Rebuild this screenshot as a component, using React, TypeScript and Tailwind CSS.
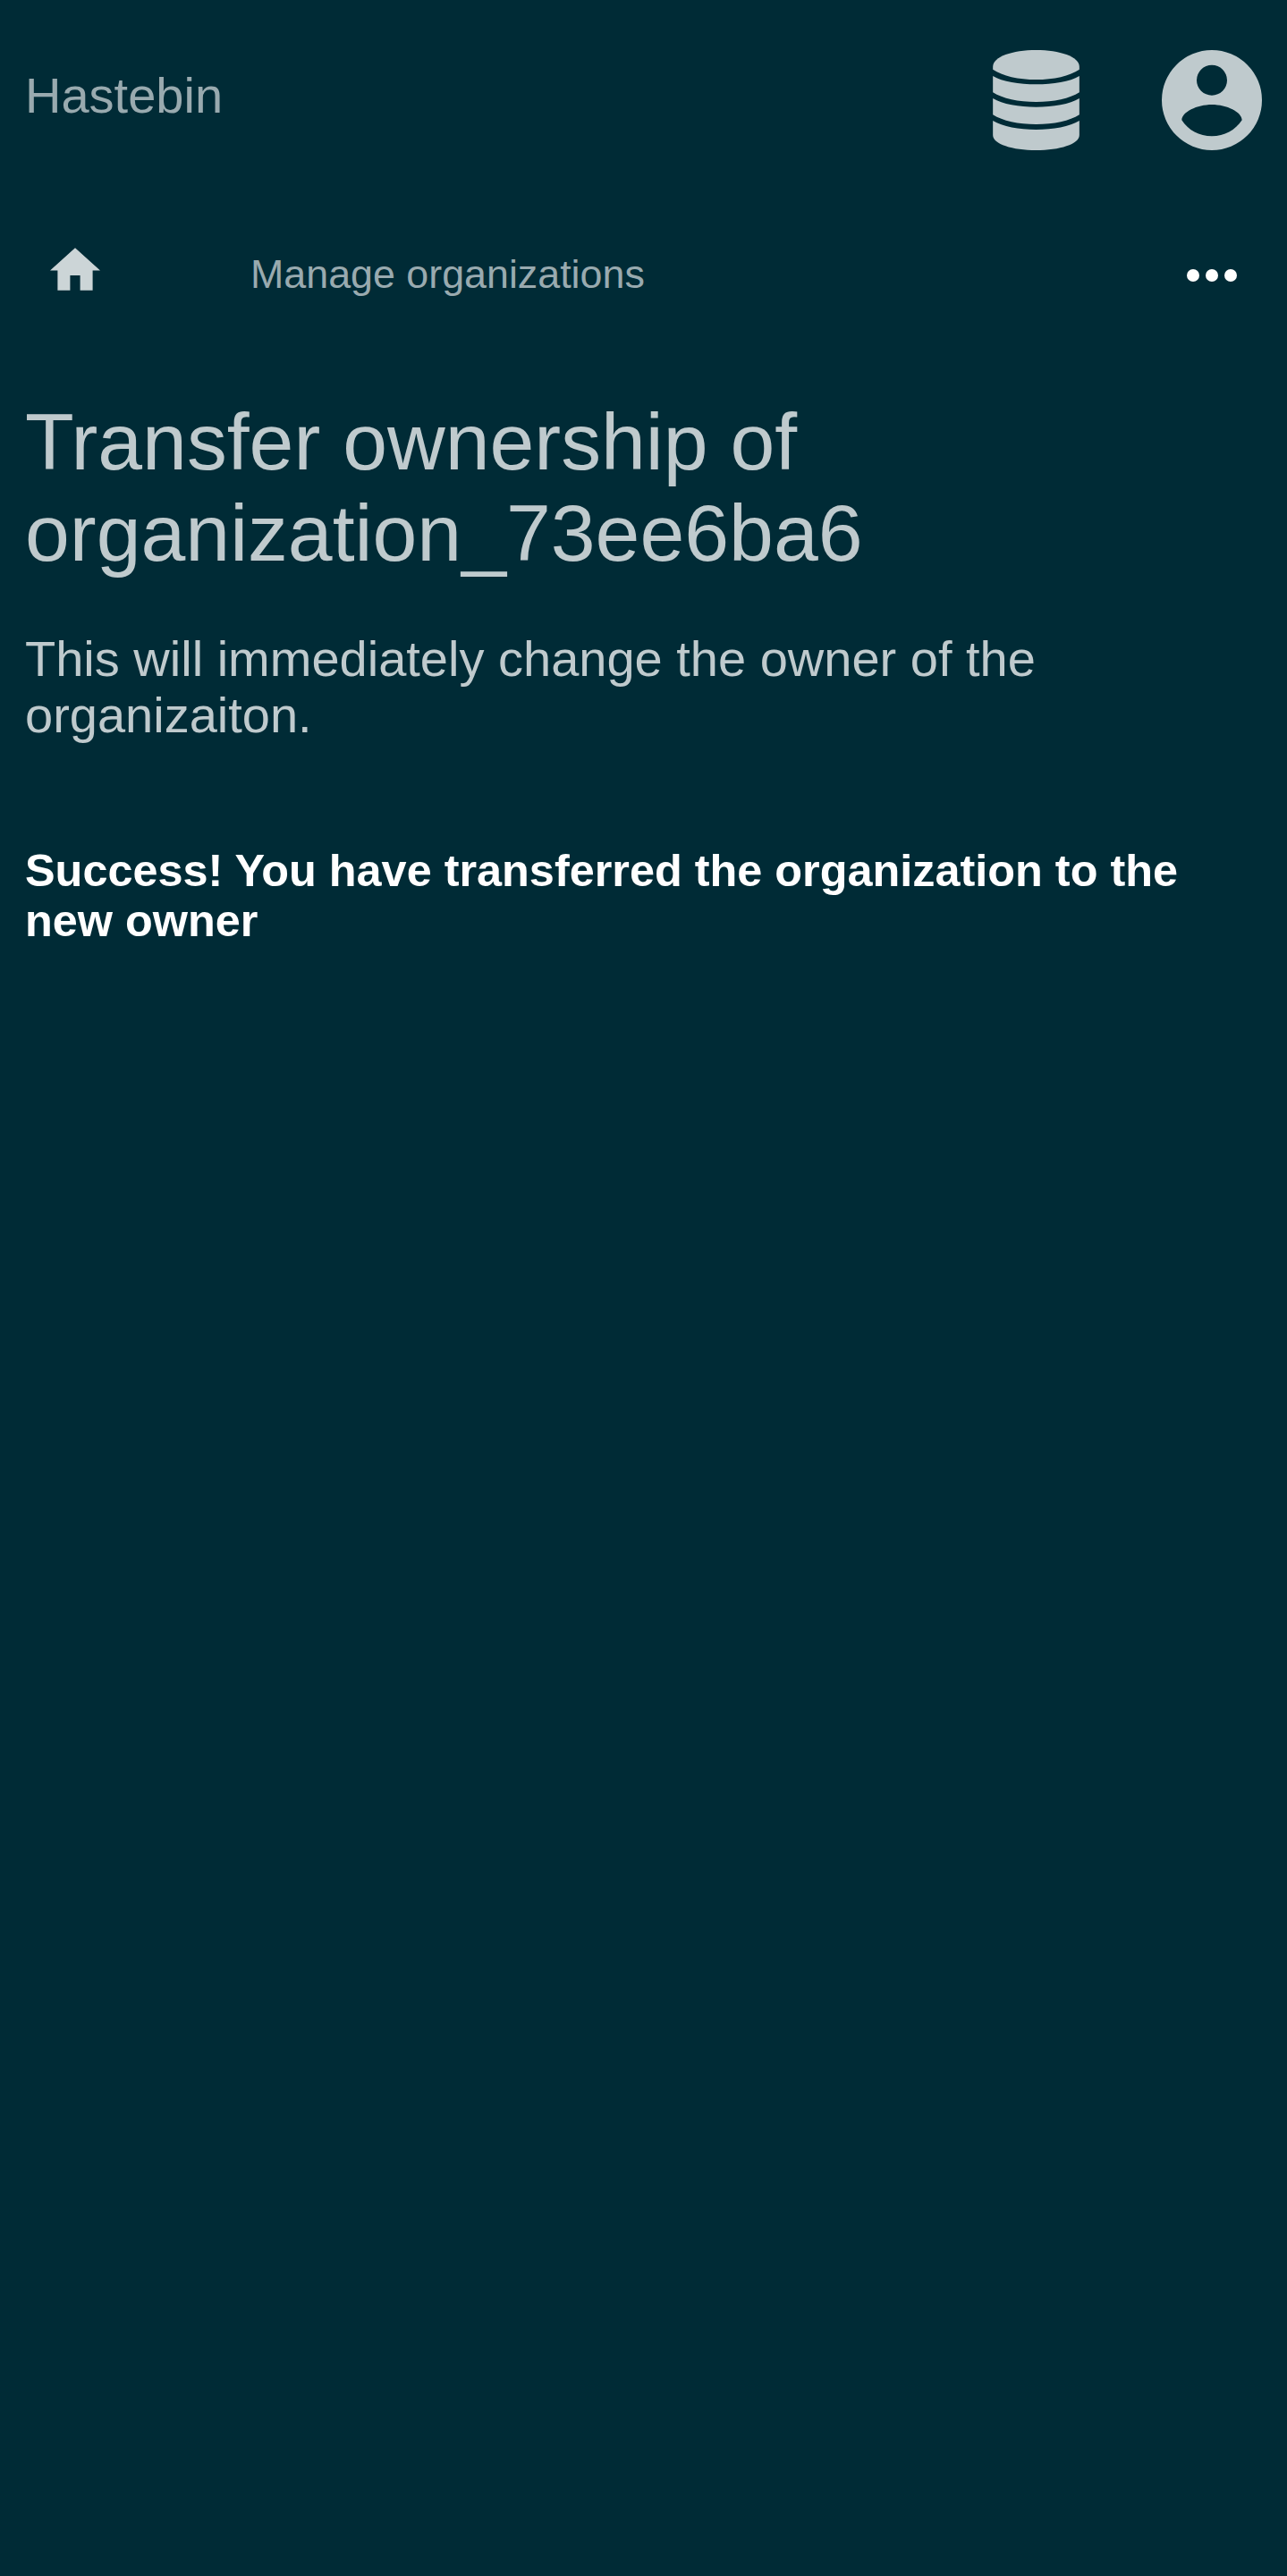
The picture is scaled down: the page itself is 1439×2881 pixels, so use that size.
// Four-tier cylinder
function DatabaseIcon() {
  return (
    <svg className="h-28 w-[97px] fill-current" viewBox="0 0 290 336">
      <path d="M0 56C0 22 66 0 145 0S290 22 290 56V65C258 87 204 99 145 99S32 87 0 65Z" />
      <path d="M0 87C32 106 88 115 145 115S258 106 290 87V142C258 163 204 174 145 174S32 163 0 142Z" />
      <path d="M0 162C32 182 88 191 145 191S258 182 290 162V217C258 238 204 249 145 249S32 238 0 217Z" />
      <path d="M0 237C32 257 88 267 145 267S258 257 290 237V285C290 316 224 336 145 336S0 316 0 285Z" />
    </svg>
  );
}

function AccountIcon() {
  return (
    <svg className="size-28 fill-current" viewBox="0 0 336 336">
      <path
        fillRule="evenodd"
        d="M168 0a168 168 0 1 1 0 336a168 168 0 1 1 0-336ZM168 50a51 51 0 1 0 0 102a51 51 0 1 0 0-102ZM168 183C118 183 67 208 67 235C88 269 126 289 168 289S247 269 269 235C269 208 218 183 168 183Z"
      />
    </svg>
  );
}

export default function App() {
  return (
    <div className="min-h-[2881px] bg-[#002b36] px-7 pt-14 font-['Liberation_Sans',Arial,sans-serif] text-[#bfcacd]">
      <header className="flex h-28 items-start justify-between">
        <a className="pt-[19px] text-[56px] leading-[63px] text-[#99aaaf]">Hastebin</a>
        <div className="flex items-center gap-[92px]">
          <DatabaseIcon />
          <AccountIcon />
        </div>
      </header>
      <nav className="mt-[103px] flex h-[72px] items-start text-[#ccd5d7]">
        <svg className="mt-[6px] ml-7 h-12 w-14 fill-current" viewBox="0 0 20 17">
          <path d="M8 17V11H12V17H17V9H20L10 0L0 9H3V17Z" />
        </svg>
        <a className="mt-[10px] ml-[168px] flex-1 text-[44.8px] leading-[51px] text-[#99aaaf]">Manage organizations</a>
        <svg className="mt-2 mr-7 h-14 w-14 fill-white" viewBox="0 0 56 56">
          <circle cx="7" cy="29" r="7" />
          <circle cx="28" cy="29" r="7" />
          <circle cx="49" cy="29" r="7" />
        </svg>
      </nav>
      <h1 className="mt-[100px] text-[89.6px] leading-[102px]">Transfer ownership of<br />organization_73ee6ba6</h1>
      <p className="mt-[58px] text-[56px] leading-[63px]">This will immediately change the owner of the<br />organizaiton.</p>
      <p className="mt-[114.5px] text-[50.4px] leading-[56px] font-bold text-white">Success! You have transferred the organization to the<br />new owner</p>
    </div>
  );
}
